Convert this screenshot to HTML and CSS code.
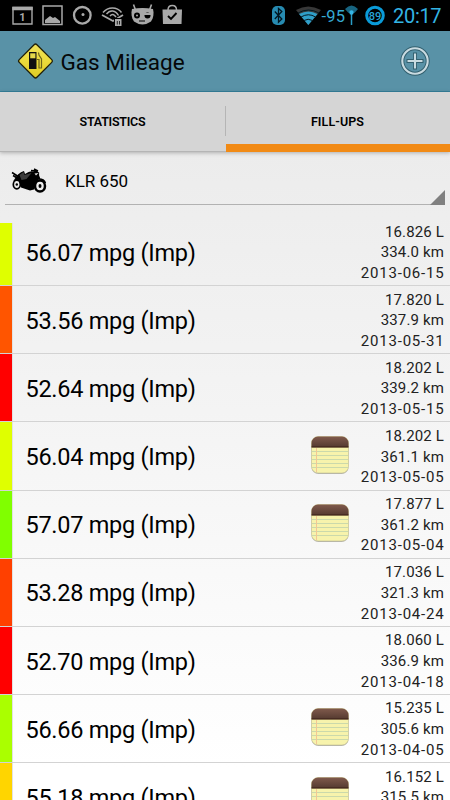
FILE: index.html
```html
<!DOCTYPE html>
<html lang="en">
<head>
<meta charset="utf-8">
<title>Gas Mileage</title>
<link rel="stylesheet" href="styles.css">
</head>
<body>
<svg width="0" height="0" class="defs">
  <defs>
    <linearGradient id="lid" x1="0" y1="0" x2="0" y2="1"><stop offset="0" stop-color="#805a4c"/><stop offset="1" stop-color="#553a30"/></linearGradient>
    <linearGradient id="sign" x1="0" y1="0" x2="1" y2="1"><stop offset="0" stop-color="#f0e25c"/><stop offset=".5" stop-color="#ebdb3c"/><stop offset="1" stop-color="#dfca22"/></linearGradient>
    <symbol id="note" viewBox="0 0 40 40">
      <rect x="1.5" y="3" width="37" height="36" rx="7" fill="#b4b4b0"/>
      <rect x="1.5" y="1.5" width="37" height="36.500" rx="6.500" fill="#f7f3ac" stroke="#c5bf91" stroke-width=".6"/>
      <path d="M1.5 12V8a6.5 6.5 0 0 1 6.500-6.500h24a6.500 6.500 0 0 1 6.500 6.500v4z" fill="url(#lid)"/>
      <path d="M1.500 12.100h37" stroke="#35170f" stroke-width="1"/>
      <path d="M2 16.500h36M2 20.500h36M2 24.500h36M2 28.500h36M2 32.500h36" stroke="#cbd9ab" stroke-width="1"/>
      <path d="M6.500 13v24" stroke="#f3c794" stroke-width="1"/>
    </symbol>
  </defs>
</svg>
<header class="status">
  <svg class="status-left" width="190" height="31" viewBox="0 0 190 31">
    <g fill="none" stroke="#a9a9a9">
      <path d="M13 7.500h19v16.500H13z" stroke-width="1.400"/><path d="M12.300 8.500h20.400" stroke-width="3.500"/>
      <path d="M43 6h19v18.500H43z" stroke-width="1.500"/>
      <circle cx="82.300" cy="15.300" r="8.300" stroke-width="2.300"/>
      <path d="M102 15l11 6 10-6" stroke-width="1.800"/>
      <path d="M103 12.500c5-6 14-6 18.500 0M106.500 14c3.500-4.500 9-4 12 1.500M110 16c2-2.500 4-2 6 1" stroke-width="1.500"/>
      <path d="M135.500 10l-2-5.500M149.500 10l2-5.500" stroke-width="1.600"/>
      <path d="M168 10c0-6 8.500-6 8.500 0" stroke-width="1.500"/>
    </g>
    <path d="M45 23v-3l5-4 3 2 2-1 5 4v2z" fill="#a9a9a9"/>
    <circle cx="83" cy="14.500" r="1.500" fill="#a9a9a9"/>
    <path d="M114 18h8.500v8H114z"/><path d="M115 19h6.500v7H115z" fill="#a9a9a9"/><path d="M117.300 21v3.500M119.500 21v3.500" stroke="#222"/>
    <path d="M132 9q10.500-2 21 0c1.200 4 .5 9-2 12.500q-8.500 6-17 0c-2.500-3.500-3.200-8.500-2-12.500z" fill="#a9a9a9"/>
    <circle cx="137" cy="15.500" r="3"/><circle cx="147.500" cy="15.500" r="3"/><path d="M139 21h6" stroke="#222" stroke-width="1.300"/><circle cx="137" cy="15.500" r="1" fill="#a9a9a9"/><path d="M144 14h7" stroke="#a9a9a9" stroke-width="2"/>
    <path d="M162.500 9.500H182l-.5 14.500h-18.500z" fill="#a9a9a9"/>
    <path d="M168 16l3 3 5.500-6" fill="none" stroke="#000" stroke-width="1.900"/>
    <text x="22.500" y="20.500" class="cal">1</text>
  </svg>
  <svg class="status-right" width="120" height="31" viewBox="270 0 120 31">
    <rect x="272" y="6" width="13" height="19" rx="5" fill="#278bb1"/>
    <path d="M274.800 11.500l7 7.500-3.300 3.200V8.500l3.300 3-7 7.500" fill="none" stroke="#001621" stroke-width="1.300"/>
    <path d="M296 10q12-7 25 0L308.300 25z" fill="#383838"/>
    <path d="M299 14q9.500-5 18.500 0l-9.200 11z" fill="#2f9fc9"/>
    <path d="M298 13q10.500-6 21 0M301 17q7.500-4.500 14.500 0M304 20.500q4-2.500 8.500 0" fill="none" stroke="#031a23" stroke-width="1"/>
    <text x="321.500" y="21.500" class="signal" textLength="23.500">-95</text>
    <path d="M345 9q6.500-7 13 0l-3.500 4q-3-3-6 0z" fill="#176480"/>
    <path d="M351.500 12v13" stroke="#2a9cc5" stroke-width="1.500"/><circle cx="351.500" cy="12.500" r="2.200" fill="#35b5e5"/>
    <circle cx="375" cy="15.500" r="8.300" fill="none" stroke="#0a9bd8" stroke-width="3"/>
    <text x="375" y="19.500" class="battery">89</text>
  </svg>
  <span class="clock">20:17</span>
</header>
<nav class="appbar">
  <svg class="logo" width="40" height="40" viewBox="0 0 40 40">
    <rect x="8" y="7.500" width="25" height="25" rx="2" transform="rotate(45 20.500 20)" fill="url(#sign)" stroke="#211f09" stroke-width="1.300"/>
    <path d="M14 11h7.500v17H14z" fill="#111"/><path d="M15.200 12.300h5.200v5h-5.200z" fill="#e4d84a"/>
    <path d="M21.500 18.500h2.500v8.500h2.500v-9l-2.500-4-.5-2.500" fill="none" stroke="#6c641d" stroke-width="1.200"/>
  </svg>
  <h1>Gas Mileage</h1>
  <svg class="add" width="32" height="32" viewBox="0 0 32 32">
    <g fill="none" stroke="#33606f"><circle cx="16" cy="16" r="12.700" stroke-width="4"/><path d="M16 7.500v17M7.500 16h17" stroke-width="4"/></g>
    <g fill="none" stroke="#c9dbe1"><circle cx="16" cy="16" r="12.700" stroke-width="2.100"/><path d="M16 8.500v15M8.500 16h15" stroke-width="2.100"/></g>
  </svg>
</nav>
<div class="tabs"><div class="tab"><span>STATISTICS</span></div><div class="tab active"><span>FILL-UPS</span></div></div>
<main>
  <div class="vehicle">
    <svg class="bike" width="36" height="28" viewBox="0 0 36 28">
      <g fill="none" stroke="#000"><ellipse cx="5.800" cy="17.500" rx="3.500" ry="4.300" stroke-width="1.700"/><ellipse cx="29" cy="19" rx="5" ry="5.500" stroke-width="2.500"/><path d="M25 5l4.500 8M20 3.500l5 .5 3 2.500M23 2l4 2M1 5.500l7 4.500M2 8.500l5 3M28 12q5 0 6.500 4" stroke-width="1.500"/></g>
      <path d="M7 7.500q3-3 6-3.500l1 3q5-3.500 8-2.500l3-1 3 3 .5 5.500-4 3.500-1.500 7-4 1-9-3-2-7-6 1 2-3z"/><path d="M8.500 8l4-3 1 3 7-2-5 6-5 1z" fill="#3c3c3c"/><path d="M23.500 6.500l4-.5-2.500 2.500z" fill="#ddd"/>
      <circle cx="5.800" cy="17.500" r="1.200"/><ellipse cx="29" cy="19" rx="1.500" ry="2"/>
    </svg>
    <span>KLR 650</span>
    <i class="corner"></i>
  </div>
  <ul class="list">
    <li><i class="bar lemon"></i><b>56.07 mpg (Imp)</b><p>16.826 L<br>334.0 km<br><time>2013-06-15</time></p></li>
    <li><i class="bar orange"></i><b>53.56 mpg (Imp)</b><p>17.820 L<br>337.9 km<br><time>2013-05-31</time></p></li>
    <li><i class="bar red"></i><b>52.64 mpg (Imp)</b><p>18.202 L<br>339.2 km<br><time>2013-05-15</time></p></li>
    <li><i class="bar lemon"></i><b>56.04 mpg (Imp)</b><svg class="note"><use href="#note"/></svg><p>18.202 L<br>361.1 km<br><time>2013-05-05</time></p></li>
    <li><i class="bar green"></i><b>57.07 mpg (Imp)</b><svg class="note"><use href="#note"/></svg><p>17.877 L<br>361.2 km<br><time>2013-05-04</time></p></li>
    <li><i class="bar vermilion"></i><b>53.28 mpg (Imp)</b><p>17.036 L<br>321.3 km<br><time>2013-04-24</time></p></li>
    <li><i class="bar red"></i><b>52.70 mpg (Imp)</b><p>18.060 L<br>336.9 km<br><time>2013-04-18</time></p></li>
    <li><i class="bar lime"></i><b>56.66 mpg (Imp)</b><svg class="note"><use href="#note"/></svg><p>15.235 L<br>305.6 km<br><time>2013-04-05</time></p></li>
    <li><i class="bar gold"></i><b>55.18 mpg (Imp)</b><svg class="note"><use href="#note"/></svg><p>16.152 L<br>315.5 km<br>&nbsp;</p></li>
  </ul>
</main>
</body>
</html>
```
FILE: styles.css
```css
* { box-sizing: border-box; }
body { margin: 0; width: 450px; height: 800px; overflow: hidden; display: flex; flex-direction: column; font-family: Roboto, sans-serif; color: #000; }
.defs { position: absolute; }
.status { height: 31px; flex: none; background: #000; display: flex; align-items: center; }
.status-right { margin-left: 80px; }
.cal { font: bold 11px Roboto, sans-serif; fill: #a9a9a9; text-anchor: middle; }
.signal { font: 16.500px Roboto, sans-serif; fill: #35a9d3; }
.battery { font: 500 11px Roboto, sans-serif; fill: #27a5d6; text-anchor: middle; }
.clock { margin-left: 3px; font-size: 20px; line-height: 31px; letter-spacing: -.3px; color: #33b5e5; padding-top: 1px; }
.appbar { height: 61px; flex: none; background: #5992a7; border-bottom: 1.500px solid #35819b; display: flex; align-items: center; padding: 0 19px 0 15px; }
h1 { margin: 2px 0 0 5.500px; font-size: 22.500px; font-weight: 400; line-height: 30px; color: #050809; }
.add { margin-left: auto; }
.tabs { height: 60px; flex: none; background: #d5d5d5; display: flex; border-bottom: 1px solid #b5b5b5; box-shadow: 0 1px 4px #0004; position: relative; }
.tab { flex: 1; display: flex; align-items: center; justify-content: center; font-size: 12.500px; font-weight: 600; letter-spacing: -.25px; position: relative; }
.active { letter-spacing: .1px; }
.active::before { content: ""; position: absolute; left: 0; top: 14px; width: 1px; height: 30px; background: #b5b5b5; }
.active::after { content: ""; position: absolute; left: 1px; right: 0; bottom: -1px; height: 8px; background: #f18a15; }
main { flex: 1; min-height: 0; background: linear-gradient(#ececec, #fff 95%); display: flex; flex-direction: column; }
.vehicle { height: 53px; flex: none; margin: 0 5px; border-bottom: 1px solid #b2b2b2; display: flex; align-items: center; padding: 5px 0 0 6px; font-size: 17px; position: relative; }
.vehicle span { margin-left: 18px; }
.corner { position: absolute; right: 0; bottom: -1px; width: 15px; height: 15px; background: #808080; clip-path: polygon(100% 0, 100% 100%, 0 100%); }
.list { list-style: none; margin: 18px 0 0; padding: 0; flex: 1; min-height: 0; overflow: hidden; }
li { height: 68.130px; border-bottom: 1px solid #d3d3d3; display: flex; align-items: center; padding-right: 6px; }
li:first-child { margin-top: -5px; }
.bar { width: 12px; height: 100%; flex: none; box-shadow: 1px 0 #e2e2e2; }
li b { font-size: 23.500px; font-weight: 400; letter-spacing: -.27px; margin-left: 13.500px; padding-top: 2.500px; white-space: nowrap; }
li p { margin: 0 0 0 auto; padding-top: 2px; text-align: right; white-space: nowrap; font-size: 15px; line-height: 20.700px; letter-spacing: .15px; color: #222; }
time { letter-spacing: .8px; margin-right: -.5px; }
.note { width: 40px; height: 40px; margin: 0 0 2px auto; }
.note + p { width: 94px; margin-left: 0; }
.lemon { background: #dfff00; }
.orange { background: #ff5500; }
.red { background: #ff0000; }
.green { background: #80ff00; }
.vermilion { background: #ff4000; }
.lime { background: #aaff00; }
.gold { background: #ffd500; }
```
